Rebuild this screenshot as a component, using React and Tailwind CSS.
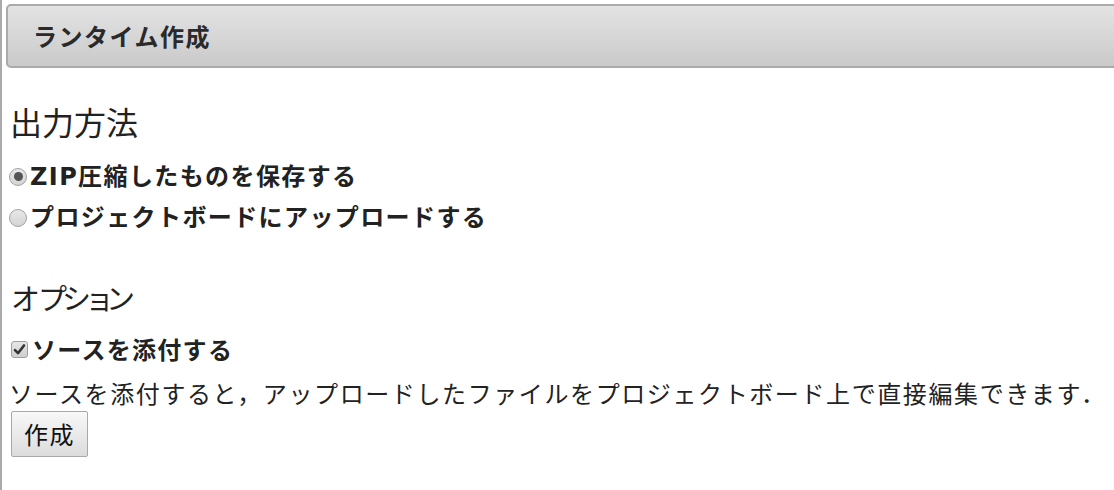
import React from "react";

const jp = "[font-family:'Noto_Sans_CJK_JP',sans-serif]";
const lab = "[font-family:'DejaVu_Sans','Noto_Sans_CJK_JP',sans-serif]";

function Radio({ checked }) {
  return (
    <span className="flex h-[18px] w-[18px] min-w-[18px] shrink-0 items-center justify-center rounded-full border border-[#a2a2a2] bg-gradient-to-b from-[#e8e8e8] to-[#d4d4d4]">
      {checked && <span className="h-[9px] w-[9px] rounded-full bg-[#555555]" />}
    </span>
  );
}

function Checkbox() {
  return (
    <span className="flex h-[17px] w-[17px] min-w-[17px] shrink-0 items-center justify-center rounded-[3px] border border-[#a0a0a0] bg-gradient-to-b from-[#e6e6e6] to-[#cfcfcf]">
      <svg width="13" height="13" viewBox="0 0 13 13">
        <path d="M2 7.2 L5 10.2 L11 2.5" fill="none" stroke="#333333" strokeWidth="2.6" strokeLinecap="round" strokeLinejoin="round" />
      </svg>
    </span>
  );
}

export default function App() {
  return (
    <div className={`h-[490px] w-full overflow-hidden border-l-2 border-[#aaaaaa] bg-white text-[#222] ${jp}`}>
      <div className="ml-[4px] mr-[-20px] mt-[4px] flex h-[64px] items-center rounded-[5px] border-2 border-[#aaaaaa] bg-gradient-to-b from-[#e3e3e3] to-[#cacaca] pl-[25px]">
        <span className="text-[24px] font-bold leading-none tracking-[1.5px] text-[#2a2a2a]">ランタイム作成</span>
      </div>

      <div className="pl-[6px]">
        <div className="mt-[33px] flex h-[40px] items-center pl-[2px] text-[32px] leading-none">
          出力方法
        </div>

        <div className="mt-[14px] flex h-[43px] items-center pl-[1px]">
          <Radio checked />
          <span className={`ml-[3px] text-[24px] font-bold leading-none tracking-[1.4px] ${lab}`}>ZIP圧縮したものを保存する</span>
        </div>
        <div className="mt-[-2px] flex h-[43px] items-center pl-[1px]">
          <Radio />
          <span className={`ml-[3px] text-[24px] font-bold leading-none tracking-[1.4px] ${lab}`}>プロジェクトボードにアップロードする</span>
        </div>

        <div className="mt-[38px] flex h-[40px] items-center pl-[3px] text-[29px] leading-none">
          <p>
            <span className="tracking-[-2px]">オ</span>
            <span className="tracking-[-5px]">プ</span>
            <span className="tracking-[-6px]">シ</span>
            <span className="tracking-[-8px]">ョ</span>
            <span>ン</span>
          </p>
        </div>

        <div className="mt-[12px] flex h-[40px] items-center pl-[3px]">
          <Checkbox />
          <span className="ml-[4px] text-[24px] font-bold leading-none tracking-[1.3px]">ソースを添付する</span>
        </div>

        <div className="mt-[6px] flex h-[36px] items-center whitespace-nowrap pl-[1px] text-[24px] leading-none tracking-[1.6px]">
          ソースを添付すると，アップロードしたファイルをプロジェクトボード上で直接編集できます．
        </div>

        <button className="ml-[3px] flex h-[46px] w-[77px] items-center justify-center rounded-[2px] border border-[#a9a9a9] bg-gradient-to-b from-[#f8f8f8] to-[#dcdcdc] text-[24px] leading-none tracking-[1.5px] text-[#111]">
          作成
        </button>
      </div>
    </div>
  );
}
